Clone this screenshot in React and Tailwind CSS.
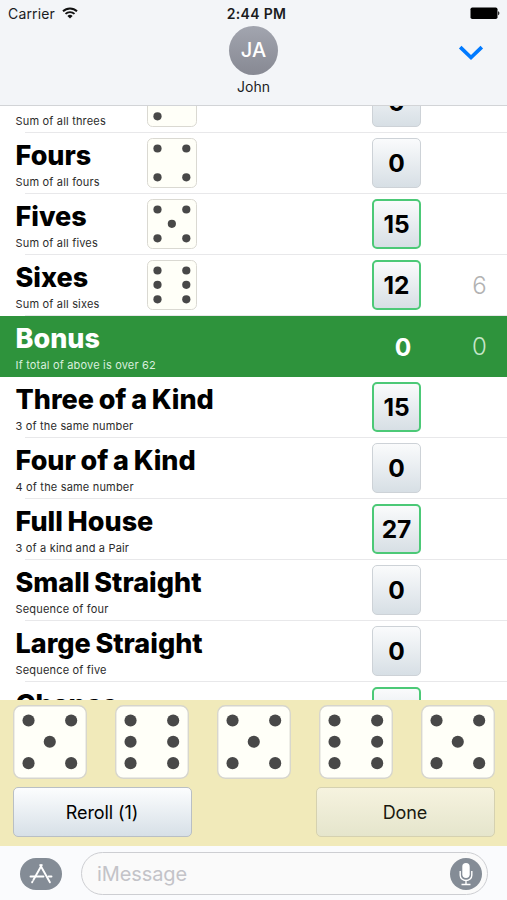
const rows = [
  { name: "Threes", hint: "Sum of all threes", die: 3, score: 0 },
  { name: "Fours", hint: "Sum of all fours", die: 4, score: 0 },
  { name: "Fives", hint: "Sum of all fives", die: 5, score: 15, picked: true },
  { name: "Sixes", hint: "Sum of all sixes", die: 6, score: 12, picked: true, other: 6 },
  { name: "Bonus", hint: "If total of above is over 62", score: 0, other: 0, bonus: true },
  { name: "Three of a Kind", hint: "3 of the same number", score: 15, picked: true },
  { name: "Four of a Kind", hint: "4 of the same number", score: 0 },
  { name: "Full House", hint: "3 of a kind and a Pair", score: 27, picked: true },
  { name: "Small Straight", hint: "Sequence of four", score: 0 },
  { name: "Large Straight", hint: "Sequence of five", score: 0 },
  { name: "Chance", hint: "Sum of all dice", score: 27, picked: true },
];

const L = 21;
const C = 49.7;
const R = 78.6;

const pips = {
  3: [[R, L], [C, C], [L, R]],
  4: [[L, L], [R, L], [L, R], [R, R]],
  5: [[L, L], [R, L], [C, C], [L, R], [R, R]],
  6: [[L, L], [R, L], [L, C], [R, C], [L, R], [R, R]],
};

function Die({ value, className }) {
  return (
    <svg viewBox="0 0 100 100" className={className}>
      <rect x="1" y="1" width="98" height="98" rx="10" fill="#fffff8" stroke="#d6d5cd" strokeWidth="1.8" />
      {pips[value].map(([x, y]) => (
        <circle key={`${x}-${y}`} cx={x} cy={y} r="8.2" fill="#484848" />
      ))}
    </svg>
  );
}

function StatusBar() {
  return (
    <div className="h-[26px] grid grid-cols-3 items-center pl-[8px] pr-[7px] text-[14px] text-[#1b1c1e]">
      <div className="flex items-center gap-[7px]">
        <span className="tracking-[0.15px]">Carrier</span>
        <svg width="16" height="12" viewBox="0 0 16 12" fill="none" stroke="#111" strokeWidth="1.9">
          <path d="M1 4.3a10 10 0 0 1 14 0" />
          <path d="M3.5 6.9a6.5 6.5 0 0 1 9 0" />
          <path d="M8 11.6 5.4 8.9a3.8 3.8 0 0 1 5.2 0z" fill="#111" stroke="none" />
        </svg>
      </div>
      <div className="pl-[5px] text-center font-semibold whitespace-nowrap tracking-[0.3px]">2:44 PM</div>
      <svg className="justify-self-end" width="30" height="12" viewBox="0 0 30 12">
        <rect x="0.5" y="0.500" width="27" height="11.500" rx="1.8" fill="#000" />
        <path d="M28.2 4.300v4c1.4-.5 1.6-3.500 0-4z" fill="#000" />
      </svg>
    </div>
  );
}

function Header() {
  return (
    <header className="h-[106px] shrink-0 bg-[#f3f5f8] border-b border-[#d2d4d7]">
      <StatusBar />
      <div className="grid grid-cols-3">
        <div />
        <div className="flex flex-col items-center">
          <div className="w-[49px] h-[49px] -mt-[0.5px] rounded-full bg-linear-to-b from-[#a2a5af] to-[#878993] flex items-center justify-center text-white text-[20px] font-medium">
            JA
          </div>
          <div className="mt-px text-[14px] leading-[22px] text-[#1b1c1e]">John</div>
        </div>
        <svg className="justify-self-end mr-[23px] mt-[18px]" width="26" height="18" viewBox="0 0 26 18">
          <path d="M2.200 3.200 13 13.500 23.800 3.200" fill="none" stroke="#007aff" strokeWidth="3.700" />
        </svg>
      </div>
    </header>
  );
}

function Score({ row }) {
  if (row.bonus) {
    return <div className="w-[50px] pl-[12px] pt-[2px] text-center text-[24.500px] font-bold">{row.score}</div>;
  }

  return (
    <div
      className={`w-[49px] h-[50px] pt-px rounded-[5px] flex items-center justify-center text-[24.500px] font-bold bg-linear-to-b from-[#fafbfc] to-[#d7dfe5]
      ${row.picked ? "border-2 border-[#4cc977]" : "border border-[#cdd2d7]"}`}
    >
      {row.score}
    </div>
  );
}

function Row({ row }) {
  return (
    <div
      className={`h-[61px] shrink-0 flex flex-col
      ${row.bonus ? "bg-[#2e933c] text-white" : "bg-white text-black"}`}
    >
      <div className="h-[60px] flex items-center">
        <div className="w-[131px] h-[60px] shrink-0 pl-[15.500px] whitespace-nowrap">
          <div className="text-[27px] leading-[32px] mt-[7px] font-extrabold [word-spacing:-1.200px]">{row.name}</div>
          <div
            className={`text-[11px] leading-[14px] mt-[3px] tracking-[0.18px]
            ${row.bonus ? "text-[#d9efdc]" : "text-[#2b2b2b]"}`}
          >
            {row.hint}
          </div>
        </div>
        <div className="w-[50px] ml-[16px] shrink-0">
          {row.die && <Die value={row.die} className="w-[50px] h-[50px]" />}
        </div>
        <div className="w-[50px] ml-[175px] shrink-0">
          <Score row={row} />
        </div>
        <div
          className={`flex-1 pl-[30px] pt-[2px] text-center text-[24px] font-light
          ${row.bonus ? "text-[#c6e6ca]" : "text-[#b2b2b2]"}`}
        >
          {row.other}
        </div>
      </div>
      {!row.bonus && <div className="h-px ml-[25px] bg-[#e8e8ea]" />}
    </div>
  );
}

function Tray() {
  return (
    <div className="h-[146px] shrink-0 bg-[#f1eaba] px-[12.500px] pt-[5px]">
      <div className="flex justify-between">
        {[5, 6, 5, 6, 5].map((value, i) => (
          <Die key={i} value={value} className="w-[74px] h-[74px]" />
        ))}
      </div>
      <div className="mt-[8px] flex justify-between text-[18px] tracking-[-0.1px]">
        <button className="w-[179px] h-[50px] rounded-[5px] border border-[#b9bfc4] bg-linear-to-b from-[#fcfdfe] to-[#d7e0e7] text-black">
          Reroll (1)
        </button>
        <button className="w-[179px] h-[50px] rounded-[5px] border border-[#d5d1b0] bg-linear-to-b from-[#f6f3df] to-[#e5e5cc] text-[#1a1a10]">
          Done
        </button>
      </div>
    </div>
  );
}

function MessageBar() {
  return (
    <div className="h-[54px] shrink-0 bg-[#fafbfd] flex items-center pl-[20px] pr-[19px] pt-px">
      <div className="w-[42px] h-[32px] rounded-full bg-[#848c96] flex items-center justify-center">
        <svg width="24" height="22" viewBox="0 0 24 22" fill="none" stroke="#fff" strokeWidth="1.900" strokeLinecap="round">
          <path d="M12.800 2 4.500 16.800M3.600 18.400l-.5.900" />
          <path d="M11.200 2 20.900 19.300" />
          <path d="M1.500 13.500H14.500M19.500 13.500h3" />
        </svg>
      </div>
      <div className="ml-[19px] flex-1 h-[43px] rounded-full border-[1.500px] border-[#cdced2] bg-[#fafafa] flex items-center justify-between pl-[15px] pr-[5px]">
        <span className="text-[20px] text-[#c3c3c8] tracking-[-0.1px]">iMessage</span>
        <div className="w-[32px] h-[32px] rounded-full bg-[#848c96] flex items-center justify-center">
          <svg width="16" height="24" viewBox="0 0 16 24" fill="none" stroke="#fff" strokeWidth="1.400">
            <rect x="4.300" y="1" width="7.400" height="15" rx="3.700" fill="#fff" stroke="none" />
            <path d="M2.200 9v4.200a5.800 5.300 0 0 0 11.600 0V9M8 18.500v4M3.500 22.500h9" />
          </svg>
        </div>
      </div>
    </div>
  );
}

export default function App() {
  return (
    <div className="w-[507px] h-[900px] overflow-hidden flex flex-col bg-white font-['Inter',sans-serif]">
      <Header />

      {/* SCORE SHEET */}
      <div className="h-[594px] shrink-0 overflow-hidden">
        <div className="-mt-[34px] flex flex-col">
          {rows.map((row) => (
            <Row key={row.name} row={row} />
          ))}
        </div>
      </div>

      <Tray />
      <MessageBar />
    </div>
  );
}
